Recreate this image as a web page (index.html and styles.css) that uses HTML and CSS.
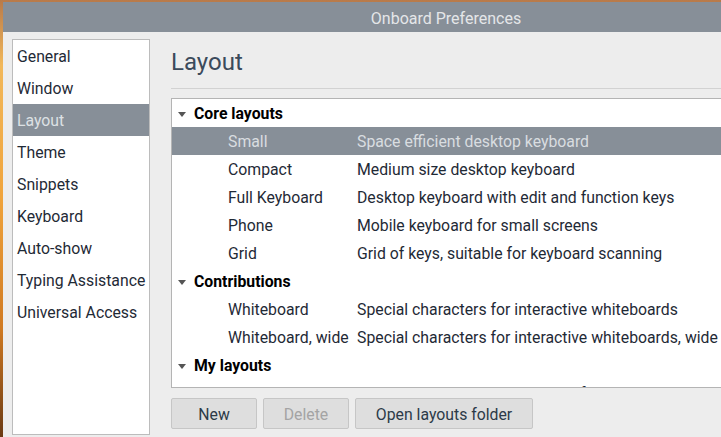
FILE: index.html
```html
<!DOCTYPE html>
<html>
<head>
<meta charset="utf-8">
<title>Onboard Preferences</title>
<link rel="stylesheet" href="styles.css">
</head>
<body>
<div class="window">
  <div class="titlebar">Onboard Preferences</div>
  <div class="content">
    <ul class="sidebar">
      <li>General</li>
      <li>Window</li>
      <li class="selected">Layout</li>
      <li>Theme</li>
      <li>Snippets</li>
      <li>Keyboard</li>
      <li>Auto-show</li>
      <li>Typing Assistance</li>
      <li>Universal Access</li>
    </ul>
    <div class="main">
      <h1 class="heading">Layout</h1>
      <div class="separator"></div>
      <div class="tree">
        <div class="row group"><span class="expander"></span><span>Core layouts</span></div>
        <div class="row child selected"><span class="name">Small</span><span class="desc">Space efficient desktop keyboard</span></div>
        <div class="row child"><span class="name">Compact</span><span class="desc">Medium size desktop keyboard</span></div>
        <div class="row child"><span class="name">Full Keyboard</span><span class="desc">Desktop keyboard with edit and function keys</span></div>
        <div class="row child"><span class="name">Phone</span><span class="desc">Mobile keyboard for small screens</span></div>
        <div class="row child"><span class="name">Grid</span><span class="desc">Grid of keys, suitable for keyboard scanning</span></div>
        <div class="row group"><span class="expander"></span><span>Contributions</span></div>
        <div class="row child"><span class="name">Whiteboard</span><span class="desc">Special characters for interactive whiteboards</span></div>
        <div class="row child"><span class="name">Whiteboard, wide</span><span class="desc">Special characters for interactive whiteboards, wide</span></div>
        <div class="row group"><span class="expander"></span><span>My layouts</span></div>
        <div class="row child"><span class="name">mine</span><span class="desc">Layout based on the keyboard of this device</span></div>
      </div>
      <div class="buttons">
        <button class="btn btn-new">New</button>
        <button class="btn btn-delete" disabled>Delete</button>
        <button class="btn btn-open">Open layouts folder</button>
      </div>
    </div>
  </div>
</div>
</body>
</html>
```
FILE: styles.css
```css
html, body {
  margin: 0;
  padding: 0;
  width: 721px;
  height: 437px;
  overflow: hidden;
}
body {
  background: linear-gradient(to bottom, #b87a4a 0%, #f2b85a 15%, #f0a43c 45%, #d07a22 75%, #6a3a14 100%);
  font-family: Roboto, "Liberation Sans", sans-serif;
  font-size: 15.8px;
}
.window {
  margin: 2px 0 0 3px;
  width: 886px;
  height: 435px;
  display: flex;
  flex-direction: column;
  background: #ededed;
}
.titlebar {
  box-sizing: border-box;
  height: 30px;
  padding-top: 3px;
  line-height: 27px;
  flex: none;
  background: #878f98;
  color: #e4e6e8;
  text-align: center;
  font-size: 16px;
}
.content {
  flex: 1;
  display: flex;
  padding: 7px 0 0 9px;
  gap: 21px;
  min-height: 0;
}
.sidebar {
  list-style: none;
  margin: 0;
  padding: 0;
  width: 136px;
  height: 394px;
  flex: none;
  background: #fff;
  border: 1px solid #bcbcbc;
}
.sidebar li {
  box-sizing: border-box;
  height: 32px;
  padding: 2px 0 0 4px;
  line-height: 30px;
  color: #1f2a36;
  white-space: nowrap;
}
.sidebar li.selected {
  background: #878f98;
  color: #dde1e4;
}
.main {
  flex: 1;
  display: flex;
  flex-direction: column;
  min-width: 0;
}
.heading {
  margin: 7px 0 0 0;
  height: 32px;
  line-height: 32px;
  font-size: 24px;
  font-weight: normal;
  color: #3b4a5b;
}
.separator {
  margin-top: 10px;
  height: 1px;
  background: #d2d2d2;
}
.tree {
  margin-top: 9px;
  height: 288px;
  background: #fff;
  border: 1px solid #b4b4b4;
  overflow: hidden;
}
.row {
  box-sizing: border-box;
  height: 28px;
  padding-top: 2px;
  line-height: 26px;
  display: flex;
  align-items: center;
  white-space: nowrap;
}
.row.group {
  font-weight: bold;
  color: #000;
  padding-left: 6px;
}
.expander {
  width: 0;
  height: 0;
  border-left: 4.5px solid transparent;
  border-right: 4.5px solid transparent;
  border-top: 5px solid #555;
  margin-right: 8px;
}
.row.child {
  padding-left: 56px;
  color: #1f2a36;
}
.row.child .name {
  width: 129px;
  flex: none;
}
.row.selected {
  background: #878f98;
  color: #d9dde0;
}
.buttons {
  margin-top: 10px;
  display: flex;
  gap: 6px;
}
.btn {
  box-sizing: border-box;
  height: 31px;
  padding: 1px 0 0;
  background: #dedede;
  border: 1px solid #c6c6c6;
  border-radius: 2px;
  font-family: Roboto, "Liberation Sans", sans-serif;
  font-size: 15.8px;
  color: #2c3a48;
}
.btn-new { width: 86px; }
.btn-delete { width: 86px; color: #a4a4a4; }
.btn-open { width: 178px; }
```
